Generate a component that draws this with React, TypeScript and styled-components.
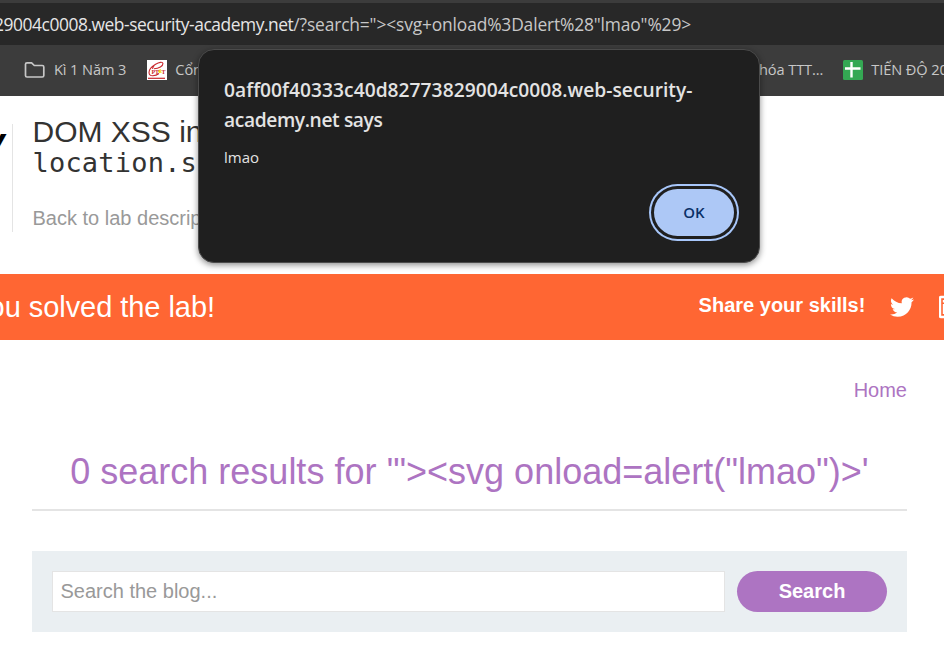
import React from "react";
import styled, { createGlobalStyle } from "styled-components";

const Global = createGlobalStyle`
  * { box-sizing: border-box; }
  body { margin: 0; background: #fff; overflow: hidden; }
`;

const ui = `"Open Sans", "Noto Sans", sans-serif`;
const arial = `"Liberation Sans", Arial, sans-serif`;

const Window = styled.div`
  width: 944px;
  height: 656px;
  overflow: hidden;
  position: relative;
  display: flex;
  flex-direction: column;
  background: #fff;
  font-family: ${arial};
`;

const BrowserChrome = styled.header`
  flex: none;
  height: 96px;
  padding-top: 3px;
  background: #3c3c3c;
  font-family: ${ui};
`;

const AddressBar = styled.div`
  width: 100%;
  height: 42px;
  padding-right: 253px;
  background: #282828;
  display: flex;
  justify-content: flex-end;
  overflow: hidden;
  white-space: pre;
  font-size: 17.4px;
  line-height: 43px;
`;

const Host = styled.span`
  flex: none;
  color: #e6e6e6;
  letter-spacing: -0.45px;
`;

const Query = styled.span`
  flex: none;
  color: #c7c7c7;
  letter-spacing: -0.15px;
`;

const Bookmarks = styled.nav`
  height: 51px;
  padding-left: 24px;
  display: flex;
  justify-content: space-between;
  overflow: hidden;
`;

const BookmarkGroup = styled.div<{ $width: number; $gap: number }>`
  flex: none;
  width: ${(p) => p.$width}px;
  display: flex;
  gap: ${(p) => p.$gap}px;
  overflow: hidden;
`;

const Bookmark = styled.a`
  flex: none;
  height: 50px;
  display: flex;
  align-items: center;
  gap: 8px;
  color: #c7c7c7;
  font-size: 14.6px;
  letter-spacing: -0.1px;
  white-space: nowrap;

  svg { flex: none; }
`;

const BookmarkLabel = styled.span`
  padding-bottom: 2px;
`;

const LabHeader = styled.section`
  flex: none;
  height: 178px;
  display: flex;
  padding-top: 28px;
`;

const LogoTail = styled.div`
  width: 13px;
  height: 108px;
  padding-right: 7px;
  border-right: 1px solid #e4e4e4;
  display: flex;
  justify-content: flex-end;
  overflow: hidden;
  color: #000;
  font: italic bold 38px/36px ${arial};
`;

const LabText = styled.div`
  padding-left: 19.5px;
  margin-top: -8px;
  white-space: nowrap;
`;

const LabTitle = styled.h1`
  margin: 0;
  color: #333332;
  font-size: 30px;
  line-height: 32px;
  font-weight: 400;
`;

const LabCode = styled.code`
  display: block;
  font: 27px/30px "DejaVu Sans Mono", monospace;
  letter-spacing: 0.2px;
`;

const BackLink = styled.a`
  display: block;
  margin-top: 28px;
  color: #999;
  font-size: 20px;
  line-height: 24px;
`;

const SolvedBanner = styled.section`
  flex: none;
  height: 66px;
  background: #ff6633;
  color: #fff;
  display: flex;
  justify-content: space-between;
  overflow: hidden;
  white-space: nowrap;
`;

const Solved = styled.p`
  margin: 0;
  width: 215px;
  display: flex;
  justify-content: flex-end;
  font-size: 29px;
  line-height: 66px;
  letter-spacing: -0.05px;
`;

const Share = styled.div`
  width: 245.4px;
  display: flex;
  gap: 25px;
  overflow: hidden;
  font-size: 20px;
  font-weight: 700;
  line-height: 62px;

  svg { flex: none; margin-top: 21px; }
`;

const Blog = styled.main`
  padding: 38px 37px 0 32px;
`;

const TopLinks = styled.nav`
  display: flex;
  justify-content: flex-end;
  color: #ad74c2;
  font-size: 20px;
  line-height: 24px;
`;

const Results = styled.h2`
  margin: 40px 0 0;
  height: 69px;
  border-bottom: 2px solid #e4e4e4;
  color: #ad74c2;
  font-size: 36px;
  line-height: 60px;
  font-weight: 400;
  text-align: center;
  white-space: nowrap;
`;

const SearchForm = styled.form`
  margin-top: 40px;
  height: 81px;
  padding: 20px;
  display: flex;
  gap: 12px;
  background: #eaeff2;
`;

const SearchInput = styled.input`
  flex: 1;
  min-width: 0;
  height: 41px;
  padding: 0 7.5px;
  border: 1px solid #e4e4e4;
  border-radius: 0;
  background: #fff;
  font: 20px ${arial};
  outline: none;

  &::placeholder { color: #999; opacity: 1; }
`;

const SearchButton = styled.button`
  width: 150px;
  height: 41px;
  padding: 0 0 2px;
  border: 0;
  border-radius: 21px;
  background: #ad74c2;
  color: #fff;
  font: bold 20px/38px ${arial};
`;

const Dialog = styled.div`
  position: absolute;
  left: 198px;
  top: 49px;
  width: 562px;
  height: 214px;
  padding: 25px 25px 26px;
  border: 1px solid #4b4b4b;
  border-radius: 16px;
  background: #1f1f1f;
  box-shadow: 0 2px 6px rgba(0, 0, 0, 0.45);
  color: #e3e3e3;
  font-family: ${ui};
  display: flex;
  flex-direction: column;
`;

const DialogTitle = styled.h3`
  margin: 0;
  display: flex;
  flex-direction: column;
  font-size: 19.2px;
  line-height: 30px;
  font-weight: 600;
  white-space: nowrap;
`;

const TitleLine = styled.span<{ $spacing: number }>`
  letter-spacing: ${(p) => p.$spacing}px;
`;

const DialogText = styled.p`
  margin: 11px 0 0;
  font-size: 15px;
  line-height: 22px;
`;

const OkButton = styled.button`
  margin: auto 0 0 auto;
  width: 80px;
  height: 47px;
  padding: 0;
  border: 0;
  border-radius: 24px;
  background: #adc8f6;
  color: #0a3067;
  font: 600 15px/47px ${ui};
  box-shadow: 0 0 0 3px #1f1f1f, 0 0 0 5px #a8c7fa;
`;

const FolderIcon = () => (
  <svg width="22" height="18" viewBox="0 0 22 18" fill="none" stroke="#c7c7c7" strokeWidth="1.7" strokeLinejoin="round">
    <path d="M1.5 3.2Q1.5 1.8 3 1.8H7.6L10.3 4.5H18.3Q19.8 4.5 19.8 6V14.5Q19.8 16 18.3 16H3Q1.5 16 1.5 14.5Z" />
  </svg>
);

const PtitIcon = () => (
  <svg width="20" height="20" viewBox="0 0 20 20">
    <rect width="20" height="20" fill="#fff" />
    <path d="M16 3.5C15 -.5 2 6.5 2 12.500C2 17.500 9 16 12 13.500M16 3.5C16 6 12 8.500 7 8.800M14 2.200C9 3 6 6 5.500 9" fill="none" stroke="#c9282d" strokeWidth="1.100" />
    <path d="M11.500 10L14 9L13.600 11.300L15 12.500L12 13L11 11.500Z" fill="#f4d817" />
    <text x="4.500" y="14" fill="#c9282d" fontFamily="Liberation Serif" fontSize="6" fontWeight="700">PT</text>
    <text x="14.500" y="14" fill="#c9282d" fontFamily="Liberation Serif" fontSize="6" fontWeight="700">T</text>
    <path d="M1 18.300H18" stroke="#c9282d" strokeWidth="1.200" />
  </svg>
);

const SheetIcon = () => (
  <svg width="20" height="20" viewBox="0 0 20 20">
    <rect width="20" height="20" rx="1.500" fill="#34a853" />
    <path d="M2 8.500H17.500M8.500 2V17.500" stroke="#fff" strokeWidth="2.400" />
  </svg>
);

const TwitterIcon = () => (
  <svg width="24" height="24" viewBox="0 0 24 24" fill="#fff">
    <path d="M23.953 4.570a10 10 0 01-2.825.775 4.958 4.958 0 002.163-2.723c-.951.555-2.005.959-3.127 1.184a4.920 4.920 0 00-8.384 4.482C7.690 8.095 4.067 6.130 1.640 3.162a4.822 4.822 0 00-.666 2.475c0 1.710.870 3.213 2.188 4.096a4.904 4.904 0 01-2.228-.616v.060a4.923 4.923 0 003.946 4.827 4.996 4.996 0 01-2.212.085 4.936 4.936 0 004.604 3.417 9.867 9.867 0 01-6.102 2.105c-.390 0-.779-.023-1.170-.067a13.995 13.995 0 007.557 2.209c9.053 0 13.998-7.496 13.998-13.985 0-.210 0-.420-.015-.630A9.935 9.935 0 0024 4.590z" />
  </svg>
);

const LinkedInIcon = () => (
  <svg width="24" height="24" viewBox="0 0 24 24">
    <rect x="1" y="2" width="20" height="20" rx="1" fill="none" stroke="#fff" strokeWidth="2.400" />
    <path d="M3.800 9H6.800V19H3.800ZM3.800 5H6.800V7.500H3.800ZM9.500 9H12.500V11Q14 9 16 9Q19 9 19 13V19H16V14Q16 12 14.500 12Q12.500 12 12.500 14V19H9.500Z" fill="#fff" />
  </svg>
);

export default function App() {
  return (
    <Window>
      <Global />
      <BrowserChrome>
        <AddressBar>
          <Host>29004c0008.web-security-academy.net</Host>
          <Query>{'/?search="><svg+onload%3Dalert%28"lmao"%29>'}</Query>
        </AddressBar>
        <Bookmarks>
          <BookmarkGroup $width={180} $gap={21}>
            <Bookmark><FolderIcon /><BookmarkLabel>Kì 1 Năm 3</BookmarkLabel></Bookmark>
            <Bookmark><PtitIcon /><BookmarkLabel>Cổng</BookmarkLabel></Bookmark>
          </BookmarkGroup>
          <BookmarkGroup $width={185} $gap={20}>
            <Bookmark><BookmarkLabel>hóa TTT...</BookmarkLabel></Bookmark>
            <Bookmark><SheetIcon /><BookmarkLabel>TIẾN ĐỘ 20</BookmarkLabel></Bookmark>
          </BookmarkGroup>
        </Bookmarks>
      </BrowserChrome>

      <LabHeader>
        <LogoTail>y</LogoTail>
        <LabText>
          <LabTitle>
            DOM XSS in
            <LabCode>location.s</LabCode>
          </LabTitle>
          <BackLink>Back to lab descrip</BackLink>
        </LabText>
      </LabHeader>

      <SolvedBanner>
        <Solved>ou solved the lab!</Solved>
        <Share>
          Share your skills!
          <TwitterIcon />
          <LinkedInIcon />
        </Share>
      </SolvedBanner>

      <Blog>
        <TopLinks>Home</TopLinks>
        <Results>{`0 search results for '"><svg onload=alert("lmao")>'`}</Results>
        <SearchForm>
          <SearchInput placeholder="Search the blog..." />
          <SearchButton type="button">Search</SearchButton>
        </SearchForm>
      </Blog>

      <Dialog role="alertdialog">
        <DialogTitle>
          <TitleLine $spacing={0.03}>0aff00f40333c40d82773829004c0008.web-security-</TitleLine>
          <TitleLine $spacing={-0.38}>academy.net says</TitleLine>
        </DialogTitle>
        <DialogText>lmao</DialogText>
        <OkButton>OK</OkButton>
      </Dialog>
    </Window>
  );
}
